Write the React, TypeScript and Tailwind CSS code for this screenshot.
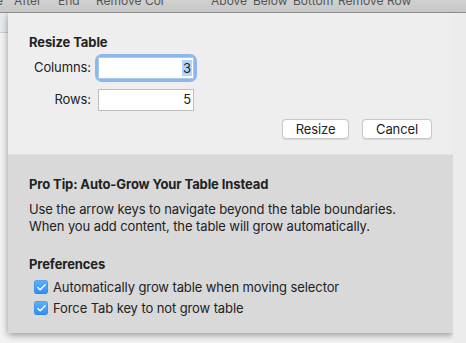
import { Check } from 'lucide-react'

const font = { fontFamily: 'Inter, "Noto Sans", sans-serif' }

function Checkbox() {
  return (
    <span className="flex h-[14px] w-[14px] shrink-0 items-center justify-center rounded-[3px] bg-gradient-to-b from-[#5fb0fd] to-[#2f8ef8] shadow-[inset_0_0_0_0.5px_rgba(0,0,0,0.15)]">
      <Check className="h-[11px] w-[11px] text-white" strokeWidth={3} />
    </span>
  )
}

export default function App() {
  // toolbar labels that peek out above the sheet, with fixed slot widths
  const toolbar = [
    ['e', 'w-[18px] ml-[-4px]'],
    ['After', 'w-[44px]'],
    ['End', 'w-[38px]'],
    ['Remove Col', 'w-[115px]'],
    ['Above', 'w-[42px]'],
    ['Below', 'w-[40px]'],
    ['Bottom', 'w-[45px]'],
    ['Remove Row', 'w-[80px]'],
  ]

  return (
    <div
      className="flex h-[343px] w-[466px] flex-col overflow-hidden bg-[#f3f3f3] text-[13px] tracking-[-0.1px] text-[#222]"
      style={font}
    >
      {/* Toolbar behind the sheet */}
      <div className="relative z-10 flex h-[13px] shrink-0 items-end overflow-hidden border-b border-[#8c8c8c] bg-gradient-to-b from-[#d0d0d0] to-[#c8c8c8] text-[12px] leading-none tracking-normal text-[#555]">
        <div className="flex translate-y-[-5px] whitespace-nowrap">
          {toolbar.map(([t, w]) => (
            <span key={t} className={`shrink-0 ${w}`}>
              {t}
            </span>
          ))}
        </div>
      </div>

      <div className="flex min-h-0 flex-1">
        <div className="w-[8px] shrink-0">
          <div className="h-[20px] border-b border-[#c9ccd1] bg-[#e6ebf2]" />
        </div>

        {/* Sheet */}
        <div className="flex h-[320px] w-[445px] shrink-0 flex-col shadow-[0_2px_7px_rgba(0,0,0,0.4)]">
          <div className="flex h-[141px] flex-col bg-[#eeeeee] pl-[21px] pr-[21px]">
            <div className="mt-[21px] font-bold leading-[16px]">Resize Table</div>

            <div className="mt-[7px] grid grid-cols-[62px_96px] items-center gap-x-[7px] gap-y-[10px]">
              <span className="text-right">Columns:</span>
              <div className="h-[22px] rounded-[4px] shadow-[0_0_0_3px_#8db7ec]">
                <div className="flex h-full items-center justify-end border border-[#a9c8ee] bg-white pr-[1px] leading-[16px]">
                  <span className="bg-[#b3d4fc] px-[1px]">3</span>
                </div>
              </div>
              <span className="text-right">Rows:</span>
              <div className="flex h-[22px] items-center justify-end border border-[#bdbdbd] bg-white pr-[2px]">
                5
              </div>
            </div>

            <div className="mt-[8px] flex justify-end gap-[13px]">
              <button className="h-[20px] w-[67px] rounded-[4px] border border-[#c8c8c8] bg-white leading-none shadow-[0_0.5px_1px_rgba(0,0,0,0.1)]">
                Resize
              </button>
              <button className="h-[20px] w-[70px] rounded-[4px] border border-[#c8c8c8] bg-white leading-none shadow-[0_0.5px_1px_rgba(0,0,0,0.1)]">
                Cancel
              </button>
            </div>
          </div>

          <div className="flex flex-1 flex-col border-t border-[#e2e2e2] bg-[#d9d9d9] pl-[21px]">
            <div className="mt-[21px] font-bold leading-[16px]">Pro Tip: Auto-Grow Your Table Instead</div>
            <p className="mt-[9px] leading-[17px]">
              Use the arrow keys to navigate beyond the table boundaries.
              <br />
              When you add content, the table will grow automatically.
            </p>
            <div className="mt-[21px] font-bold leading-[16px]">Preferences</div>
            <div className="mt-[7px] flex flex-col gap-[5px] pl-[5px]">
              <label className="flex items-center gap-[5px] leading-[16px]">
                <Checkbox />
                Automatically grow table when moving selector
              </label>
              <label className="flex items-center gap-[5px] leading-[16px]">
                <Checkbox />
                Force Tab key to not grow table
              </label>
            </div>
          </div>
        </div>

        <div className="flex-1 bg-[#ececec]" />
      </div>
    </div>
  )
}
